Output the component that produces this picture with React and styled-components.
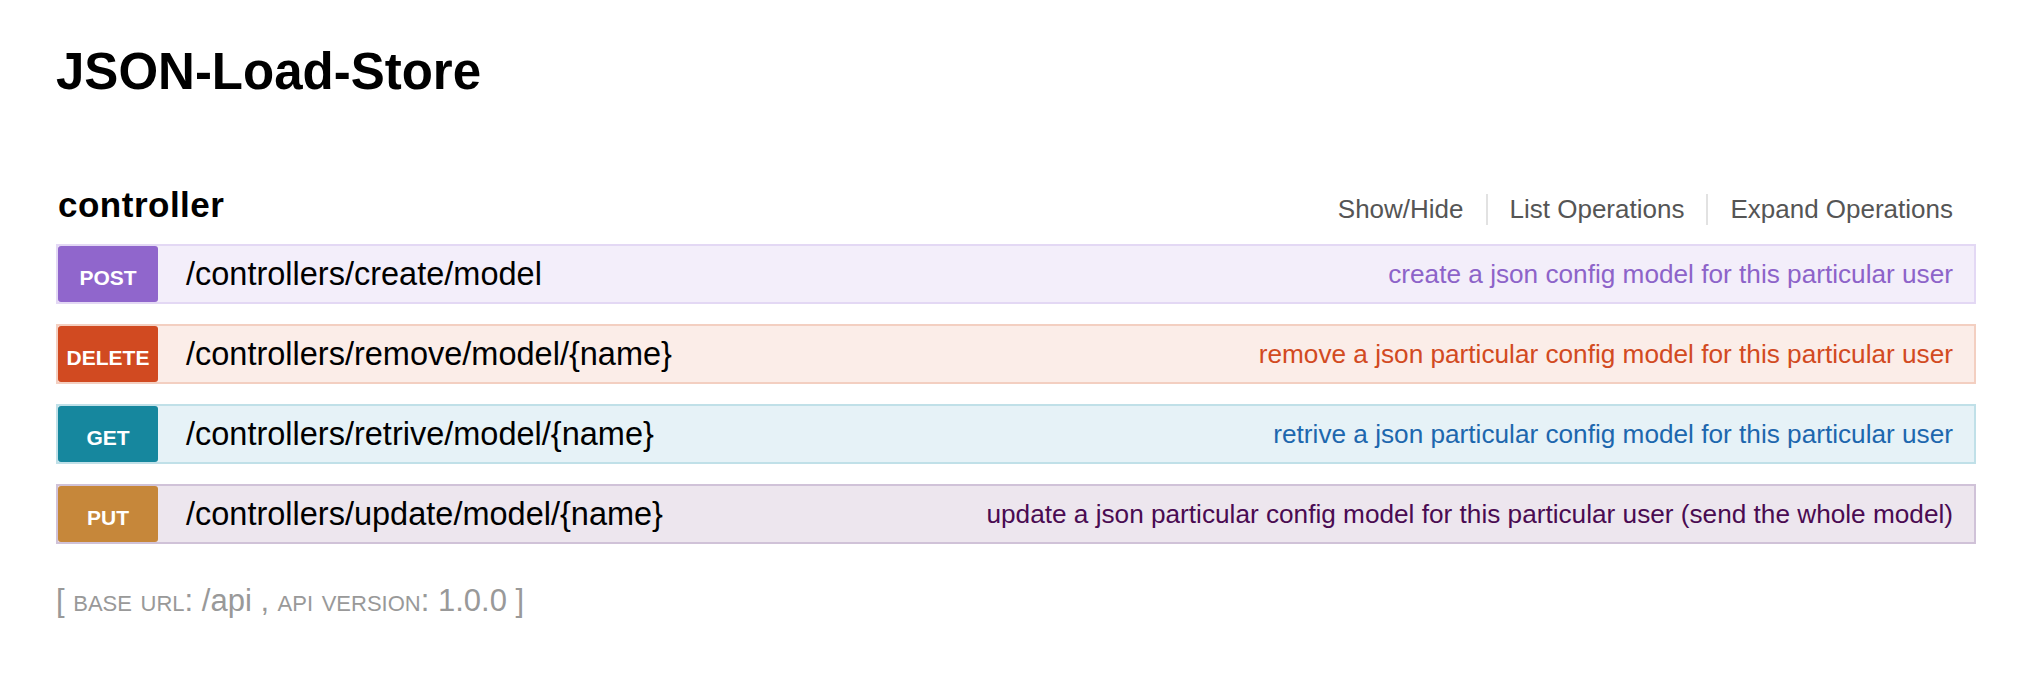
import React from 'react';
import styled, { createGlobalStyle } from 'styled-components';

const GlobalStyle = createGlobalStyle`
  html, body {
    margin: 0;
    padding: 0;
    background: #fff;
  }
  body {
    font-family: "Liberation Sans", Arial, Helvetica, sans-serif;
    color: #000;
  }
`;

const methods = {
  post: { badge: '#9066cc', bg: '#f3eefa', border: '#e3d8f4', text: '#8d63c9' },
  delete: { badge: '#d14a21', bg: '#fbede8', border: '#f3cfc1', text: '#d24a21' },
  get: { badge: '#16879e', bg: '#e6f2f7', border: '#c0e0e8', text: '#1d67ae' },
  put: { badge: '#c6873a', bg: '#ede6ee', border: '#d0c2d8', text: '#4a0b52' },
};

const operations = [
  { method: 'post', path: '/controllers/create/model', summary: 'create a json config model for this particular user' },
  { method: 'delete', path: '/controllers/remove/model/{name}', summary: 'remove a json particular config model for this particular user' },
  { method: 'get', path: '/controllers/retrive/model/{name}', summary: 'retrive a json particular config model for this particular user' },
  { method: 'put', path: '/controllers/update/model/{name}', summary: 'update a json particular config model for this particular user (send the whole model)' },
];

const Container = styled.div`
  width: 1920px;
  margin-left: 56px;
  padding-top: 42px;
`;

const Title = styled.h1`
  margin: 0;
  font-size: 51px;
  line-height: 60px;
  font-weight: 700;
  color: #000;
`;

const Resource = styled.div`
  margin-top: 83px;
`;

const Heading = styled.div`
  display: flex;
  justify-content: space-between;
  align-items: flex-end;
  height: 40px;
  margin-bottom: 19px;
`;

const Name = styled.h2`
  margin: 0 0 0 2px;
  font-size: 35px;
  line-height: 40px;
  letter-spacing: 0.5px;
  font-weight: 700;
`;

const Links = styled.ul`
  display: flex;
  list-style: none;
  margin: 0 23px 0 0;
  padding: 0;
`;

const LinkItem = styled.li`
  padding: 0 22px;
  font-size: 26px;
  line-height: 31px;
  color: #555;
  border-right: 2px solid #e2e2e2;
  &:last-child {
    border-right: none;
    padding-right: 0;
  }
`;

const OperationList = styled.div`
  display: flex;
  flex-direction: column;
  gap: 20px;
`;

const Operation = styled.div`
  display: flex;
  align-items: center;
  height: 56px;
  background: ${(p) => methods[p.$method].bg};
  border: 2px solid ${(p) => methods[p.$method].border};
`;

const Badge = styled.span`
  display: flex;
  align-items: center;
  justify-content: center;
  box-sizing: border-box;
  width: 100px;
  height: 56px;
  padding-top: 8px;
  border-radius: 3px;
  background: ${(p) => methods[p.$method].badge};
  color: #fff;
  font-size: 21px;
  font-weight: 700;
  text-transform: uppercase;
`;

const Path = styled.span`
  flex: 1;
  padding-left: 28px;
  font-size: 32.5px;
  line-height: 56px;
  color: #000;
`;

const Summary = styled.span`
  padding-right: 21px;
  font-size: 26.2px;
  line-height: 56px;
  color: ${(p) => methods[p.$method].text};
`;

const Footer = styled.h4`
  margin: 39px 0 0 0;
  font-size: 31px;
  line-height: 36px;
  font-weight: 400;
  color: #999;
`;

const SmallCaps = styled.span`
  font-variant: small-caps;
  text-transform: lowercase;
`;

export default function App() {
  return (
    <>
      <GlobalStyle />
      <Container>
        <Title>JSON-Load-Store</Title>
        <Resource>
          <Heading>
            <Name>controller</Name>
            <Links>
              <LinkItem>Show/Hide</LinkItem>
              <LinkItem>List Operations</LinkItem>
              <LinkItem>Expand Operations</LinkItem>
            </Links>
          </Heading>
          <OperationList>
            {operations.map((op) => (
              <Operation key={op.path + op.method} $method={op.method}>
                <Badge $method={op.method}>{op.method}</Badge>
                <Path>{op.path}</Path>
                <Summary $method={op.method}>{op.summary}</Summary>
              </Operation>
            ))}
          </OperationList>
        </Resource>
        <Footer>
          [ <SmallCaps>base url</SmallCaps>: /api , <SmallCaps>api version</SmallCaps>: 1.0.0 ]
        </Footer>
      </Container>
    </>
  );
}
